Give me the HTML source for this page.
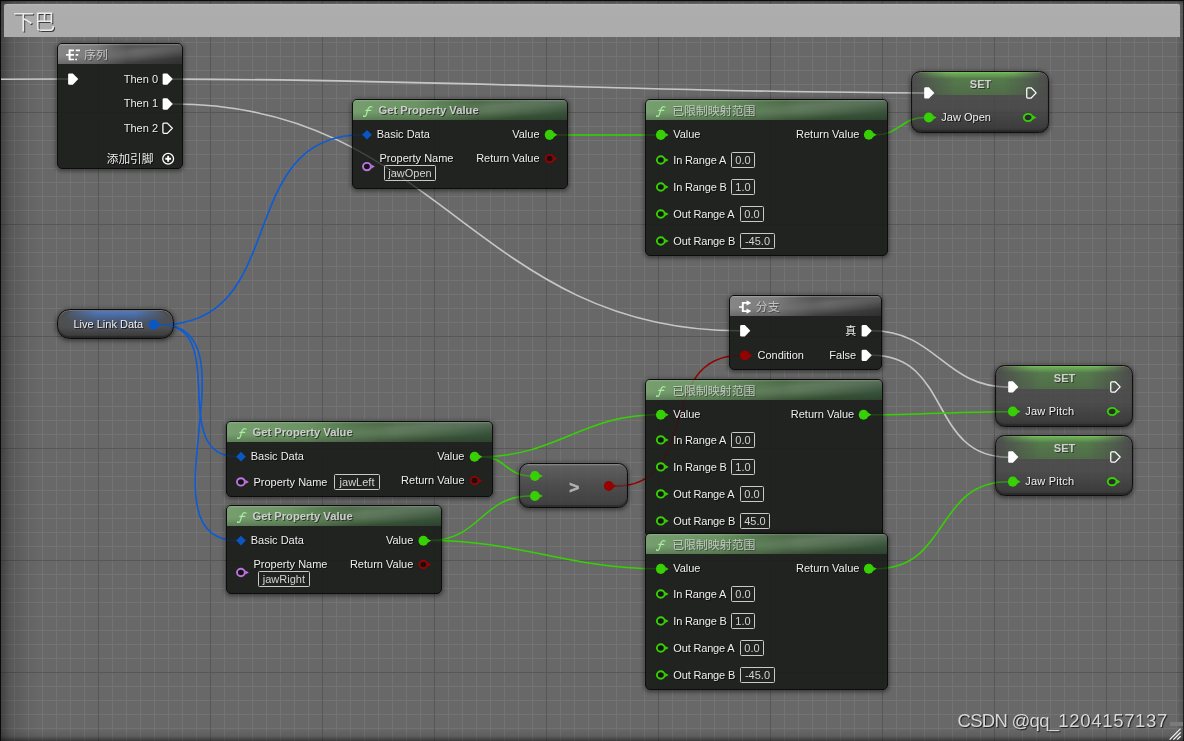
<!DOCTYPE html>
<html><head><meta charset="utf-8"><title>Blueprint</title>
<style>html,body{margin:0;padding:0;background:#676767;}
body{width:1184px;height:741px;overflow:hidden;position:relative;font-family:"Liberation Sans","Noto Sans CJK SC",sans-serif;font-size:11px;color:#f2f2f2;}
#bg{position:absolute;left:0;top:0;width:1184px;height:741px;background-color:#686868;
background-image:
 linear-gradient(to right,#575757 1px,transparent 1px),
 linear-gradient(to bottom,#575757 1px,transparent 1px),
 linear-gradient(to right,#737373 1px,transparent 1px),
 linear-gradient(to bottom,#737373 1px,transparent 1px);
background-size:112px 112px,112px 112px,14px 14px,14px 14px;
background-position:98px 0,0 0,0 0,0 0;}
#vig{position:absolute;left:0;top:0;width:1184px;height:741px;pointer-events:none;
background:
 linear-gradient(to right,rgba(0,0,0,.4),rgba(0,0,0,.16) 10px,rgba(0,0,0,.05) 26px,rgba(0,0,0,0) 42px),
 linear-gradient(to top,rgba(0,0,0,.45),rgba(0,0,0,.1) 5px,rgba(0,0,0,0) 12px),
 linear-gradient(to left,rgba(0,0,0,.7) 0,rgba(0,0,0,.7) 1px,rgba(0,0,0,.18) 1.2px,rgba(0,0,0,.1) 4px,rgba(0,0,0,0) 9px),
 linear-gradient(to bottom,rgba(0,0,0,.5),rgba(0,0,0,.1) 3px,rgba(0,0,0,0) 6px);}
#edgeT{position:absolute;left:0;top:0;width:1184px;height:1px;background:#0a0a0a;}
#edgeL{position:absolute;left:0;top:0;width:1px;height:741px;background:#0a0a0a;}
#chd{position:absolute;left:4px;top:4px;width:1176px;height:33px;background:linear-gradient(to bottom,#b9b9b9 0,#adadad 2px,#acacac 100%);border-radius:2px 2px 0 0;will-change:transform;}
#chd span{position:absolute;left:9.3px;top:6px;font-size:21px;line-height:24px;color:#ececec;text-shadow:1px 1px 0 #3a3a3a;}
#layer{position:absolute;left:0;top:0;width:1184px;height:741px;will-change:transform;}
.wires{position:absolute;left:0;top:0;}
.node{position:absolute;box-sizing:border-box;border:1px solid #0c0c0c;border-radius:5px;background:rgba(27,29,27,.925);box-shadow:0 1px 4px 1px rgba(0,0,0,.45);}
.nl{position:absolute;}
.in{position:absolute;left:-1px;top:-1px;right:-1px;bottom:-1px;}
.hd{position:absolute;left:1px;top:1px;right:1px;height:20px;border-radius:4px 4px 0 0;}
.hd.green{background:linear-gradient(to bottom,rgba(255,255,255,.2) 0,rgba(255,255,255,0) 1.8px,rgba(0,0,0,0) 60%,rgba(0,0,0,.2) 100%),linear-gradient(to right,#769e6f 0%,#6b9364 30%,#44633f 58%,#38523a 100%);}
.hd.gray{background:linear-gradient(to bottom,rgba(255,255,255,.3) 0,rgba(255,255,255,0) 1.8px,rgba(0,0,0,0) 60%,rgba(0,0,0,.2) 100%),linear-gradient(to right,#868686 0%,#7c7c7c 30%,#4e4e4e 56%,#3a3a3a 100%);}
.hd::after{content:"";position:absolute;left:35%;right:0;top:0;bottom:0;border-radius:0 4px 0 0;background:linear-gradient(174deg,rgba(255,255,255,0) 8%,rgba(255,255,255,.17) 38%,rgba(255,255,255,.15) 50%,rgba(255,255,255,0) 78%);-webkit-mask-image:linear-gradient(to right,transparent 0,#000 45%,#000 100%);mask-image:linear-gradient(to right,transparent 0,#000 45%,#000 100%);}
.fi{position:absolute;left:10.5px;top:3px;font-family:"Liberation Serif",serif;font-style:italic;font-size:15px;line-height:16px;color:#a8ee9f;}
.ic{position:absolute;}
.tt{position:absolute;left:26.5px;top:4.1px;font-weight:bold;font-size:11.2px;line-height:14px;color:#cdcdcd;text-shadow:1px 1px 0 rgba(0,0,0,.55);white-space:nowrap;}
.tt.cj{font-weight:normal;font-size:11.9px;left:27.2px;top:4.8px;color:#c0c6c0;text-shadow:1px 1px 0 rgba(0,0,0,.35);}
.pin{position:absolute;overflow:visible;}
.lbl{position:absolute;line-height:16px;height:16px;white-space:nowrap;color:#eeeeee;text-shadow:1px 1px 0 rgba(0,0,0,.7);}
.lbl.cj{font-size:11.7px;}
.lbl.rg{letter-spacing:-0.17px;}
.box{position:absolute;box-sizing:border-box;height:15.6px;line-height:15.4px;padding:0;text-align:center;border:1px solid #c9c9c9;border-radius:1.5px;color:#d2d2d2;white-space:nowrap;font-size:11px;}
.node.set{box-shadow:0 1px 4px 1px rgba(0,0,0,.45),inset 0 1px 0 rgba(255,255,255,.12),inset 0 -2px 1.5px rgba(0,0,0,.3);border-radius:9.5px;border-color:#101010;background:linear-gradient(to bottom,rgba(72,72,72,.82) 0,rgba(70,70,70,.82) 60%,rgba(50,50,50,.88) 100%);}
.setgl{position:absolute;left:3px;right:3px;top:1px;height:22.5px;border-radius:9px 9px 0 0;background:linear-gradient(to bottom,rgba(96,170,76,.55) 0,rgba(84,140,70,.5) 100%);
-webkit-mask-image:linear-gradient(to right,transparent 0,#000 32%,#000 68%,transparent 100%);mask-image:linear-gradient(to right,transparent 0,#000 32%,#000 68%,transparent 100%);}
.setgl2{position:absolute;left:3px;right:3px;top:1px;height:7px;border-radius:9px 9px 0 0;background:linear-gradient(to bottom,rgba(135,225,100,.6) 0,rgba(120,210,90,0) 100%);
-webkit-mask-image:linear-gradient(to right,transparent 0,#000 25%,#000 75%,transparent 100%);mask-image:linear-gradient(to right,transparent 0,#000 25%,#000 75%,transparent 100%);}
.settt{position:absolute;left:0;right:0;top:6.2px;text-align:center;font-weight:bold;font-size:11px;line-height:14px;color:#d0d0d0;text-shadow:1px 1px 0 rgba(0,0,0,.45);padding-left:1px;}
.node.var{box-shadow:0 1px 4px 1px rgba(0,0,0,.45),inset 0 1px 0 rgba(255,255,255,.2),inset 0 -2px 1.5px rgba(0,0,0,.3);border-radius:12.5px;background:linear-gradient(to bottom,rgba(70,72,74,.8) 0,rgba(72,72,72,.8) 60%,rgba(48,48,48,.86) 100%);}
.varglow{position:absolute;left:4px;right:4px;top:1.5px;height:22px;border-radius:13px 13px 0 0;background:linear-gradient(to bottom,rgba(80,130,215,.85),rgba(60,100,170,.35) 50%,rgba(60,100,170,0));-webkit-mask-image:linear-gradient(to right,transparent 0,#000 32%,#000 68%,transparent 100%);mask-image:linear-gradient(to right,transparent 0,#000 32%,#000 68%,transparent 100%);}
.node.op{box-shadow:0 1px 4px 1px rgba(0,0,0,.45),inset 0 -2px 1.5px rgba(0,0,0,.3);border-radius:9.5px;background:linear-gradient(to bottom,rgba(150,150,150,.85) 0,rgba(92,92,92,.82) 2px,rgba(72,72,72,.82) 45%,rgba(56,56,56,.86) 100%);}
.optt{position:absolute;left:50.2px;top:15px;font-weight:bold;font-size:17px;line-height:20px;color:#b2b2b2;-webkit-text-stroke:0.7px #b2b2b2;}
#wm{position:absolute;left:957.6px;top:710px;font-size:18.5px;line-height:22px;color:#d8d8d8;text-shadow:1px 1px 1px rgba(0,0,0,.75);white-space:nowrap;font-family:"Liberation Sans",sans-serif;}
#grip{position:absolute;left:1169px;top:728px;}
#gbar{position:absolute;left:1170px;top:722px;width:13px;height:4px;background:#7b7b7b;}
</style></head>
<body>
<div id="bg"></div>
<div id="vig"></div>
<div id="chd"><span>下巴</span></div>
<div id="layer">
<svg class="wires" width="1184" height="741" viewBox="0 0 1184 741"><g id="wp"><path d="M-60.0,79.5 C-17.2,79.5 25.2,79.1 68.0,79.1" fill="none" stroke="#c6c6c6" stroke-width="1.55" stroke-linecap="round"/><path d="M173.1,79.1 C428.1,79.1 669.4,92.9 924.4,92.9" fill="none" stroke="#c6c6c6" stroke-width="1.55" stroke-linecap="round"/><path d="M173.1,103.9 C437.8,103.9 475.5,330.8 740.2,330.8" fill="none" stroke="#c6c6c6" stroke-width="1.55" stroke-linecap="round"/><path d="M872.1,330.8 C936.3,330.8 944.1,387.1 1008.3,387.1" fill="none" stroke="#c6c6c6" stroke-width="1.55" stroke-linecap="round"/><path d="M872.1,355.3 C951.5,355.3 928.9,457.2 1008.3,457.2" fill="none" stroke="#c6c6c6" stroke-width="1.55" stroke-linecap="round"/><path d="M161.2,324.7 C291.6,324.7 232.0,134.7 362.4,134.7" fill="none" stroke="#0c5cd8" stroke-width="1.55" stroke-linecap="round"/><path d="M161.2,324.7 C230.2,324.7 167.3,456.6 236.3,456.6" fill="none" stroke="#0c5cd8" stroke-width="1.55" stroke-linecap="round"/><path d="M161.2,324.7 C258.1,324.7 139.4,540.4 236.3,540.4" fill="none" stroke="#0c5cd8" stroke-width="1.55" stroke-linecap="round"/><path d="M557.5,134.9 C590.3,134.9 623.2,134.9 656.0,134.9" fill="none" stroke="#36d005" stroke-width="1.5" stroke-linecap="round"/><path d="M876.5,134.8 C898.1,134.8 902.4,117.5 924.0,117.5" fill="none" stroke="#36d005" stroke-width="1.5" stroke-linecap="round"/><path d="M482.3,456.7 C554.2,456.7 584.1,414.7 656.0,414.7" fill="none" stroke="#36d005" stroke-width="1.5" stroke-linecap="round"/><path d="M482.3,456.7 C504.6,456.7 507.7,476.0 530.0,476.0" fill="none" stroke="#36d005" stroke-width="1.5" stroke-linecap="round"/><path d="M431.2,540.4 C478.9,540.4 482.3,496.0 530.0,496.0" fill="none" stroke="#36d005" stroke-width="1.5" stroke-linecap="round"/><path d="M431.2,540.4 C515.6,540.4 571.6,568.8 656.0,568.8" fill="none" stroke="#36d005" stroke-width="1.5" stroke-linecap="round"/><path d="M871.5,414.7 C918.0,414.7 961.5,411.7 1008.0,411.7" fill="none" stroke="#36d005" stroke-width="1.5" stroke-linecap="round"/><path d="M876.5,568.8 C949.4,568.8 935.1,481.7 1008.0,481.7" fill="none" stroke="#36d005" stroke-width="1.5" stroke-linecap="round"/><path d="M616.2,486.0 C701.0,486.0 655.2,355.5 740.0,355.5" fill="none" stroke="#920404" stroke-width="1.5" stroke-linecap="round"/></g></svg>
<div class="node " style="left:57px;top:43px;width:126px;height:126px"><div class="in"><div class="hd gray"></div></div></div>
<div class="node var" style="left:57px;top:309px;width:117px;height:30px"><div class="in"><div class="varglow"></div></div></div>
<div class="node " style="left:352px;top:99px;width:216px;height:90px"><div class="in"><div class="hd green"></div></div></div>
<div class="node " style="left:645px;top:99px;width:243px;height:157px"><div class="in"><div class="hd green"></div></div></div>
<div class="node set" style="left:911px;top:71px;width:138px;height:62px"><div class="in"><div class="setgl"></div><div class="setgl2"></div></div></div>
<div class="node " style="left:729px;top:295px;width:153px;height:75px"><div class="in"><div class="hd gray"></div></div></div>
<div class="node " style="left:226px;top:421px;width:267px;height:76px"><div class="in"><div class="hd green"></div></div></div>
<div class="node " style="left:226px;top:505px;width:216px;height:89px"><div class="in"><div class="hd green"></div></div></div>
<div class="node op" style="left:519px;top:463px;width:109px;height:45px"><div class="in"></div></div>
<div class="node " style="left:645px;top:379px;width:238px;height:158px"><div class="in"><div class="hd green"></div></div></div>
<div class="node " style="left:645px;top:533px;width:243px;height:157px"><div class="in"><div class="hd green"></div></div></div>
<div class="node set" style="left:995px;top:365px;width:138px;height:62px"><div class="in"><div class="setgl"></div><div class="setgl2"></div></div></div>
<div class="node set" style="left:995px;top:435px;width:138px;height:61px"><div class="in"><div class="setgl"></div><div class="setgl2"></div></div></div>
<svg class="wires" width="1184" height="741" viewBox="0 0 1184 741"><defs><clipPath id="cc"><rect x="58" y="310" width="115" height="28" rx="8"/><rect x="912" y="72" width="136" height="60" rx="8"/><rect x="520" y="464" width="107" height="43" rx="8"/><rect x="996" y="366" width="136" height="60" rx="8"/><rect x="996" y="436" width="136" height="59" rx="8"/></clipPath></defs><g opacity="0.16"><path d="M-60.0,79.5 C-17.2,79.5 25.2,79.1 68.0,79.1" fill="none" stroke="#c6c6c6" stroke-width="1.55" stroke-linecap="round"/><path d="M173.1,79.1 C428.1,79.1 669.4,92.9 924.4,92.9" fill="none" stroke="#c6c6c6" stroke-width="1.55" stroke-linecap="round"/><path d="M173.1,103.9 C437.8,103.9 475.5,330.8 740.2,330.8" fill="none" stroke="#c6c6c6" stroke-width="1.55" stroke-linecap="round"/><path d="M872.1,330.8 C936.3,330.8 944.1,387.1 1008.3,387.1" fill="none" stroke="#c6c6c6" stroke-width="1.55" stroke-linecap="round"/><path d="M872.1,355.3 C951.5,355.3 928.9,457.2 1008.3,457.2" fill="none" stroke="#c6c6c6" stroke-width="1.55" stroke-linecap="round"/><path d="M161.2,324.7 C291.6,324.7 232.0,134.7 362.4,134.7" fill="none" stroke="#0c5cd8" stroke-width="1.55" stroke-linecap="round"/><path d="M161.2,324.7 C230.2,324.7 167.3,456.6 236.3,456.6" fill="none" stroke="#0c5cd8" stroke-width="1.55" stroke-linecap="round"/><path d="M161.2,324.7 C258.1,324.7 139.4,540.4 236.3,540.4" fill="none" stroke="#0c5cd8" stroke-width="1.55" stroke-linecap="round"/><path d="M557.5,134.9 C590.3,134.9 623.2,134.9 656.0,134.9" fill="none" stroke="#36d005" stroke-width="1.5" stroke-linecap="round"/><path d="M876.5,134.8 C898.1,134.8 902.4,117.5 924.0,117.5" fill="none" stroke="#36d005" stroke-width="1.5" stroke-linecap="round"/><path d="M482.3,456.7 C554.2,456.7 584.1,414.7 656.0,414.7" fill="none" stroke="#36d005" stroke-width="1.5" stroke-linecap="round"/><path d="M482.3,456.7 C504.6,456.7 507.7,476.0 530.0,476.0" fill="none" stroke="#36d005" stroke-width="1.5" stroke-linecap="round"/><path d="M431.2,540.4 C478.9,540.4 482.3,496.0 530.0,496.0" fill="none" stroke="#36d005" stroke-width="1.5" stroke-linecap="round"/><path d="M431.2,540.4 C515.6,540.4 571.6,568.8 656.0,568.8" fill="none" stroke="#36d005" stroke-width="1.5" stroke-linecap="round"/><path d="M871.5,414.7 C918.0,414.7 961.5,411.7 1008.0,411.7" fill="none" stroke="#36d005" stroke-width="1.5" stroke-linecap="round"/><path d="M876.5,568.8 C949.4,568.8 935.1,481.7 1008.0,481.7" fill="none" stroke="#36d005" stroke-width="1.5" stroke-linecap="round"/><path d="M616.2,486.0 C701.0,486.0 655.2,355.5 740.0,355.5" fill="none" stroke="#920404" stroke-width="1.5" stroke-linecap="round"/></g><g opacity="0.32" clip-path="url(#cc)"><path d="M-60.0,79.5 C-17.2,79.5 25.2,79.1 68.0,79.1" fill="none" stroke="#c6c6c6" stroke-width="1.55" stroke-linecap="round"/><path d="M173.1,79.1 C428.1,79.1 669.4,92.9 924.4,92.9" fill="none" stroke="#c6c6c6" stroke-width="1.55" stroke-linecap="round"/><path d="M173.1,103.9 C437.8,103.9 475.5,330.8 740.2,330.8" fill="none" stroke="#c6c6c6" stroke-width="1.55" stroke-linecap="round"/><path d="M872.1,330.8 C936.3,330.8 944.1,387.1 1008.3,387.1" fill="none" stroke="#c6c6c6" stroke-width="1.55" stroke-linecap="round"/><path d="M872.1,355.3 C951.5,355.3 928.9,457.2 1008.3,457.2" fill="none" stroke="#c6c6c6" stroke-width="1.55" stroke-linecap="round"/><path d="M161.2,324.7 C291.6,324.7 232.0,134.7 362.4,134.7" fill="none" stroke="#0c5cd8" stroke-width="1.55" stroke-linecap="round"/><path d="M161.2,324.7 C230.2,324.7 167.3,456.6 236.3,456.6" fill="none" stroke="#0c5cd8" stroke-width="1.55" stroke-linecap="round"/><path d="M161.2,324.7 C258.1,324.7 139.4,540.4 236.3,540.4" fill="none" stroke="#0c5cd8" stroke-width="1.55" stroke-linecap="round"/><path d="M557.5,134.9 C590.3,134.9 623.2,134.9 656.0,134.9" fill="none" stroke="#36d005" stroke-width="1.5" stroke-linecap="round"/><path d="M876.5,134.8 C898.1,134.8 902.4,117.5 924.0,117.5" fill="none" stroke="#36d005" stroke-width="1.5" stroke-linecap="round"/><path d="M482.3,456.7 C554.2,456.7 584.1,414.7 656.0,414.7" fill="none" stroke="#36d005" stroke-width="1.5" stroke-linecap="round"/><path d="M482.3,456.7 C504.6,456.7 507.7,476.0 530.0,476.0" fill="none" stroke="#36d005" stroke-width="1.5" stroke-linecap="round"/><path d="M431.2,540.4 C478.9,540.4 482.3,496.0 530.0,496.0" fill="none" stroke="#36d005" stroke-width="1.5" stroke-linecap="round"/><path d="M431.2,540.4 C515.6,540.4 571.6,568.8 656.0,568.8" fill="none" stroke="#36d005" stroke-width="1.5" stroke-linecap="round"/><path d="M871.5,414.7 C918.0,414.7 961.5,411.7 1008.0,411.7" fill="none" stroke="#36d005" stroke-width="1.5" stroke-linecap="round"/><path d="M876.5,568.8 C949.4,568.8 935.1,481.7 1008.0,481.7" fill="none" stroke="#36d005" stroke-width="1.5" stroke-linecap="round"/><path d="M616.2,486.0 C701.0,486.0 655.2,355.5 740.0,355.5" fill="none" stroke="#920404" stroke-width="1.5" stroke-linecap="round"/></g></svg>
<div class="nl" style="left:57px;top:43px;width:126px;height:126px"><svg class="ic" style="left:9px;top:6px" width="15" height="12" viewBox="0 0 15 12"><path d="M0,5.9 H3.4" stroke="#fff" stroke-width="1.6" fill="none"/><path d="M3.6,0.5 V11.3" stroke="#fff" stroke-width="2" fill="none"/><path d="M3.6,1.3 H8 M3.6,5.9 H8 M3.6,10.5 H8" stroke="#fff" stroke-width="1.7" fill="none"/><path d="M9.7,1.3 H14 M9.7,5.9 H12.2 M9.2,10.5 H11" stroke="#fff" stroke-width="1.7" fill="none"/></svg><span class="tt cj" style="left:27px;color:#c4c4c4">序列</span><span class="lbl r" style="right:25.00px;top:27.60px;">Then 0</span><span class="lbl r" style="right:25.00px;top:51.95px;">Then 1</span><span class="lbl r" style="right:25.00px;top:76.85px;">Then 2</span><span class="lbl cj r" style="right:29.55px;top:108.05px;">添加引脚</span></div>
<div class="nl" style="left:57px;top:309px;width:117px;height:30px"><span class="lbl" style="left:16.50px;top:6.95px;">Live Link Data</span></div>
<div class="nl" style="left:352px;top:99px;width:216px;height:90px"><svg class="ic" style="left:11px;top:7px" width="11" height="12" viewBox="0 0 11 12"><path d="M0.2,9.7 C1.1,10.8 2.7,10.6 3.3,8.6 L5,3.1 C5.6,1 7.1,0.3 9,1" fill="none" stroke="#a8ee9f" stroke-width="1.25" stroke-linecap="round"/><path d="M2.8,4.4 H7.8" stroke="#a8ee9f" stroke-width="1.1" stroke-linecap="round"/></svg><span class="tt">Get Property Value</span><span class="lbl" style="left:24.70px;top:27.15px;">Basic Data</span><span class="lbl r" style="right:28.45px;top:27.15px;">Value</span><span class="lbl r" style="right:28.45px;top:51.10px;">Return Value</span><span class="lbl" style="left:27.50px;top:51.10px;">Property Name</span><span class="box" style="left:32.00px;top:66.20px;width:52px">jawOpen</span></div>
<div class="nl" style="left:645px;top:99px;width:243px;height:157px"><svg class="ic" style="left:11px;top:7px" width="11" height="12" viewBox="0 0 11 12"><path d="M0.2,9.7 C1.1,10.8 2.7,10.6 3.3,8.6 L5,3.1 C5.6,1 7.1,0.3 9,1" fill="none" stroke="#a8ee9f" stroke-width="1.25" stroke-linecap="round"/><path d="M2.8,4.4 H7.8" stroke="#a8ee9f" stroke-width="1.1" stroke-linecap="round"/></svg><span class="tt cj">已限制映射范围</span><span class="lbl" style="left:28.15px;top:27.15px;">Value</span><span class="lbl r" style="right:28.60px;top:27.15px;">Return Value</span><span class="lbl rg" style="left:28.35px;top:52.90px;">In Range A</span><span class="box" style="left:86.00px;top:53.20px;width:24px">0.0</span><span class="lbl rg" style="left:28.35px;top:79.90px;">In Range B</span><span class="box" style="left:86.00px;top:80.20px;width:24px">1.0</span><span class="lbl rg" style="left:28.35px;top:106.90px;">Out Range A</span><span class="box" style="left:95.00px;top:107.20px;width:24px">0.0</span><span class="lbl rg" style="left:28.35px;top:133.90px;">Out Range B</span><span class="box" style="left:95.00px;top:134.20px;width:35px">-45.0</span></div>
<div class="nl" style="left:911px;top:71px;width:138px;height:62px"><span class="settt">SET</span><span class="lbl" style="left:30.35px;top:38.10px;">Jaw Open</span></div>
<div class="nl" style="left:729px;top:295px;width:153px;height:75px"><svg class="ic" style="left:10px;top:5px" width="13" height="14" viewBox="0 0 13 14"><path d="M0,7 H3.5" stroke="#fff" stroke-width="1.6" fill="none"/><path d="M8.2,2.9 H3.8 V11.1 H8.2" stroke="#fff" stroke-width="1.9" fill="none"/><path d="M7.6,0.2 L12.3,2.9 L7.6,5.6 Z M7.6,8.4 L12.3,11.1 L7.6,13.8 Z" fill="#fff"/></svg><span class="tt cj" style="left:26.8px;color:#c4c4c4">分支</span><span class="lbl cj r" style="right:25.75px;top:27.55px;font-size:11px">真</span><span class="lbl" style="left:28.50px;top:52.20px;">Condition</span><span class="lbl r" style="right:25.75px;top:52.20px;">False</span></div>
<div class="nl" style="left:226px;top:421px;width:267px;height:76px"><svg class="ic" style="left:11px;top:7px" width="11" height="12" viewBox="0 0 11 12"><path d="M0.2,9.7 C1.1,10.8 2.7,10.6 3.3,8.6 L5,3.1 C5.6,1 7.1,0.3 9,1" fill="none" stroke="#a8ee9f" stroke-width="1.25" stroke-linecap="round"/><path d="M2.8,4.4 H7.8" stroke="#a8ee9f" stroke-width="1.1" stroke-linecap="round"/></svg><span class="tt">Get Property Value</span><span class="lbl" style="left:24.70px;top:27.10px;">Basic Data</span><span class="lbl r" style="right:28.50px;top:27.10px;">Value</span><span class="lbl r" style="right:28.50px;top:51.05px;">Return Value</span><span class="lbl" style="left:27.50px;top:52.95px;">Property Name</span><span class="box" style="left:108.10px;top:53.10px;width:45.9px">jawLeft</span></div>
<div class="nl" style="left:226px;top:505px;width:216px;height:89px"><svg class="ic" style="left:11px;top:7px" width="11" height="12" viewBox="0 0 11 12"><path d="M0.2,9.7 C1.1,10.8 2.7,10.6 3.3,8.6 L5,3.1 C5.6,1 7.1,0.3 9,1" fill="none" stroke="#a8ee9f" stroke-width="1.25" stroke-linecap="round"/><path d="M2.8,4.4 H7.8" stroke="#a8ee9f" stroke-width="1.1" stroke-linecap="round"/></svg><span class="tt">Get Property Value</span><span class="lbl" style="left:24.70px;top:27.05px;">Basic Data</span><span class="lbl r" style="right:28.70px;top:27.05px;">Value</span><span class="lbl r" style="right:28.70px;top:51.00px;">Return Value</span><span class="lbl" style="left:27.50px;top:51.00px;">Property Name</span><span class="box" style="left:32.00px;top:66.10px;width:51.8px">jawRight</span></div>
<div class="nl" style="left:519px;top:463px;width:109px;height:45px"><span class="optt">&gt;</span></div>
<div class="nl" style="left:645px;top:379px;width:238px;height:158px"><svg class="ic" style="left:11px;top:7px" width="11" height="12" viewBox="0 0 11 12"><path d="M0.2,9.7 C1.1,10.8 2.7,10.6 3.3,8.6 L5,3.1 C5.6,1 7.1,0.3 9,1" fill="none" stroke="#a8ee9f" stroke-width="1.25" stroke-linecap="round"/><path d="M2.8,4.4 H7.8" stroke="#a8ee9f" stroke-width="1.1" stroke-linecap="round"/></svg><span class="tt cj">已限制映射范围</span><span class="lbl" style="left:28.15px;top:27.05px;">Value</span><span class="lbl r" style="right:28.80px;top:27.05px;">Return Value</span><span class="lbl rg" style="left:28.35px;top:52.80px;">In Range A</span><span class="box" style="left:86.00px;top:53.10px;width:24px">0.0</span><span class="lbl rg" style="left:28.35px;top:79.80px;">In Range B</span><span class="box" style="left:86.00px;top:80.10px;width:24px">1.0</span><span class="lbl rg" style="left:28.35px;top:106.80px;">Out Range A</span><span class="box" style="left:95.00px;top:107.10px;width:24px">0.0</span><span class="lbl rg" style="left:28.35px;top:133.80px;">Out Range B</span><span class="box" style="left:95.00px;top:134.10px;width:29.9px">45.0</span></div>
<div class="nl" style="left:645px;top:533px;width:243px;height:157px"><svg class="ic" style="left:11px;top:7px" width="11" height="12" viewBox="0 0 11 12"><path d="M0.2,9.7 C1.1,10.8 2.7,10.6 3.3,8.6 L5,3.1 C5.6,1 7.1,0.3 9,1" fill="none" stroke="#a8ee9f" stroke-width="1.25" stroke-linecap="round"/><path d="M2.8,4.4 H7.8" stroke="#a8ee9f" stroke-width="1.1" stroke-linecap="round"/></svg><span class="tt cj">已限制映射范围</span><span class="lbl" style="left:28.15px;top:27.15px;">Value</span><span class="lbl r" style="right:28.60px;top:27.15px;">Return Value</span><span class="lbl rg" style="left:28.35px;top:52.90px;">In Range A</span><span class="box" style="left:86.00px;top:53.20px;width:24px">0.0</span><span class="lbl rg" style="left:28.35px;top:79.90px;">In Range B</span><span class="box" style="left:86.00px;top:80.20px;width:24px">1.0</span><span class="lbl rg" style="left:28.35px;top:106.90px;">Out Range A</span><span class="box" style="left:95.00px;top:107.20px;width:24px">0.0</span><span class="lbl rg" style="left:28.35px;top:133.90px;">Out Range B</span><span class="box" style="left:95.00px;top:134.20px;width:35px">-45.0</span></div>
<div class="nl" style="left:995px;top:365px;width:138px;height:62px"><span class="settt">SET</span><span class="lbl" style="left:30.35px;top:38.10px;letter-spacing:0.2px">Jaw Pitch</span></div>
<div class="nl" style="left:995px;top:435px;width:138px;height:61px"><span class="settt">SET</span><span class="lbl" style="left:30.35px;top:38.25px;letter-spacing:0.2px">Jaw Pitch</span></div>
<svg class="wires" width="1184" height="741" viewBox="0 0 1184 741"><g transform="translate(73.10 79.10)"><path d="M-3.7,-5.7 H-0.3 L5.2,0 L-0.3,5.7 H-3.7 Q-5,5.7 -5,4.4 V-4.4 Q-5,-5.7 -3.7,-5.7 Z" fill="#fff"/></g>
<g transform="translate(167.60 79.10)"><path d="M-3.7,-5.7 H-0.3 L5.2,0 L-0.3,5.7 H-3.7 Q-5,5.7 -5,4.4 V-4.4 Q-5,-5.7 -3.7,-5.7 Z" fill="#fff"/></g>
<g transform="translate(167.60 103.95)"><path d="M-3.7,-5.7 H-0.3 L5.2,0 L-0.3,5.7 H-3.7 Q-5,5.7 -5,4.4 V-4.4 Q-5,-5.7 -3.7,-5.7 Z" fill="#fff"/></g>
<g transform="translate(167.60 128.25)"><path d="M-3.6,-5.1 H-0.3 L4.7,0 L-0.3,5.1 H-3.6 Q-4.7,5.1 -4.7,4 V-4 Q-4.7,-5.1 -3.6,-5.1 Z" fill="none" stroke="#fff" stroke-width="1.25" stroke-linejoin="round"/></g>
<g transform="translate(168.15 158.75)"><circle cx="0" cy="0" r="5.4" fill="none" stroke="#fff" stroke-width="1.3"/><path d="M0,-2.9 V2.9 M-2.9,0 H2.9" stroke="#fff" stroke-width="1.9"/></g>
<g transform="translate(153.60 324.75)"><path d="M4.4,-2.1 L7.8,0 L4.4,2.1 Z" fill="#0a57c4"/><ellipse cx="0" cy="0" rx="4.85" ry="5.05" fill="#0a57c4"/></g>
<g transform="translate(367.00 134.70)"><path d="M0,-4.8 L4.8,0 L0,4.8 L-4.8,0 Z" fill="#0a57c4"/></g>
<g transform="translate(549.60 134.85)"><path d="M4.4,-2.1 L7.8,0 L4.4,2.1 Z" fill="#36d005"/><ellipse cx="0" cy="0" rx="4.85" ry="5.05" fill="#36d005"/></g>
<g transform="translate(549.60 158.60)"><path d="M4.4,-2.1 L7.9,0 L4.4,2.1 Z" fill="#920404"/><ellipse cx="0" cy="0" rx="3.9" ry="3.7" fill="#1a0e0e" stroke="#920404" stroke-width="1.9"/></g>
<g transform="translate(366.90 166.60)"><path d="M4.4,-2.1 L7.9,0 L4.4,2.1 Z" fill="#bd74e0"/><ellipse cx="0" cy="0" rx="3.9" ry="3.7" fill="#141414" stroke="#bd74e0" stroke-width="1.9"/></g>
<g transform="translate(660.80 134.90)"><path d="M4.4,-2.1 L7.8,0 L4.4,2.1 Z" fill="#36d005"/><ellipse cx="0" cy="0" rx="4.85" ry="5.05" fill="#36d005"/></g>
<g transform="translate(868.75 134.80)"><path d="M4.4,-2.1 L7.8,0 L4.4,2.1 Z" fill="#36d005"/><ellipse cx="0" cy="0" rx="4.85" ry="5.05" fill="#36d005"/></g>
<g transform="translate(660.80 160.00)"><path d="M4.4,-2.1 L7.9,0 L4.4,2.1 Z" fill="#36d005"/><ellipse cx="0" cy="0" rx="3.9" ry="3.7" fill="#141414" stroke="#36d005" stroke-width="1.9"/></g>
<g transform="translate(660.80 187.00)"><path d="M4.4,-2.1 L7.9,0 L4.4,2.1 Z" fill="#36d005"/><ellipse cx="0" cy="0" rx="3.9" ry="3.7" fill="#141414" stroke="#36d005" stroke-width="1.9"/></g>
<g transform="translate(660.80 214.00)"><path d="M4.4,-2.1 L7.9,0 L4.4,2.1 Z" fill="#36d005"/><ellipse cx="0" cy="0" rx="3.9" ry="3.7" fill="#141414" stroke="#36d005" stroke-width="1.9"/></g>
<g transform="translate(660.80 241.00)"><path d="M4.4,-2.1 L7.9,0 L4.4,2.1 Z" fill="#36d005"/><ellipse cx="0" cy="0" rx="3.9" ry="3.7" fill="#141414" stroke="#36d005" stroke-width="1.9"/></g>
<g transform="translate(929.20 92.90)"><path d="M-3.7,-5.7 H-0.3 L5.2,0 L-0.3,5.7 H-3.7 Q-5,5.7 -5,4.4 V-4.4 Q-5,-5.7 -3.7,-5.7 Z" fill="#fff"/></g>
<g transform="translate(1031.45 92.90)"><path d="M-3.6,-5.1 H-0.3 L4.7,0 L-0.3,5.1 H-3.6 Q-4.7,5.1 -4.7,4 V-4 Q-4.7,-5.1 -3.6,-5.1 Z" fill="none" stroke="#fff" stroke-width="1.25" stroke-linejoin="round"/></g>
<g transform="translate(928.75 117.50)"><path d="M4.4,-2.1 L7.8,0 L4.4,2.1 Z" fill="#36d005"/><ellipse cx="0" cy="0" rx="4.85" ry="5.05" fill="#36d005"/></g>
<g transform="translate(1028.15 117.50)"><path d="M4.8,-2.1 L8.3,0 L4.8,2.1 Z" fill="#36d005"/><ellipse cx="0" cy="0" rx="4.35" ry="3.6" fill="#2c2c2c" stroke="#36d005" stroke-width="1.9"/></g>
<g transform="translate(745.10 330.80)"><path d="M-3.7,-5.7 H-0.3 L5.2,0 L-0.3,5.7 H-3.7 Q-5,5.7 -5,4.4 V-4.4 Q-5,-5.7 -3.7,-5.7 Z" fill="#fff"/></g>
<g transform="translate(866.60 330.80)"><path d="M-3.7,-5.7 H-0.3 L5.2,0 L-0.3,5.7 H-3.7 Q-5,5.7 -5,4.4 V-4.4 Q-5,-5.7 -3.7,-5.7 Z" fill="#fff"/></g>
<g transform="translate(744.80 355.50)"><path d="M4.4,-2.1 L7.8,0 L4.4,2.1 Z" fill="#960202"/><ellipse cx="0" cy="0" rx="4.85" ry="5.05" fill="#960202"/></g>
<g transform="translate(866.60 355.35)"><path d="M-3.7,-5.7 H-0.3 L5.2,0 L-0.3,5.7 H-3.7 Q-5,5.7 -5,4.4 V-4.4 Q-5,-5.7 -3.7,-5.7 Z" fill="#fff"/></g>
<g transform="translate(241.00 456.65)"><path d="M0,-4.8 L4.8,0 L0,4.8 L-4.8,0 Z" fill="#0a57c4"/></g>
<g transform="translate(474.55 456.80)"><path d="M4.4,-2.1 L7.8,0 L4.4,2.1 Z" fill="#36d005"/><ellipse cx="0" cy="0" rx="4.85" ry="5.05" fill="#36d005"/></g>
<g transform="translate(474.55 480.55)"><path d="M4.4,-2.1 L7.9,0 L4.4,2.1 Z" fill="#920404"/><ellipse cx="0" cy="0" rx="3.9" ry="3.7" fill="#1a0e0e" stroke="#920404" stroke-width="1.9"/></g>
<g transform="translate(240.90 481.90)"><path d="M4.4,-2.1 L7.9,0 L4.4,2.1 Z" fill="#bd74e0"/><ellipse cx="0" cy="0" rx="3.9" ry="3.7" fill="#141414" stroke="#bd74e0" stroke-width="1.9"/></g>
<g transform="translate(241.00 540.60)"><path d="M0,-4.8 L4.8,0 L0,4.8 L-4.8,0 Z" fill="#0a57c4"/></g>
<g transform="translate(423.35 540.75)"><path d="M4.4,-2.1 L7.8,0 L4.4,2.1 Z" fill="#36d005"/><ellipse cx="0" cy="0" rx="4.85" ry="5.05" fill="#36d005"/></g>
<g transform="translate(423.35 564.50)"><path d="M4.4,-2.1 L7.9,0 L4.4,2.1 Z" fill="#920404"/><ellipse cx="0" cy="0" rx="3.9" ry="3.7" fill="#1a0e0e" stroke="#920404" stroke-width="1.9"/></g>
<g transform="translate(240.90 572.50)"><path d="M4.4,-2.1 L7.9,0 L4.4,2.1 Z" fill="#bd74e0"/><ellipse cx="0" cy="0" rx="3.9" ry="3.7" fill="#141414" stroke="#bd74e0" stroke-width="1.9"/></g>
<g transform="translate(534.90 476.00)"><path d="M4.4,-2.1 L7.8,0 L4.4,2.1 Z" fill="#36d005"/><ellipse cx="0" cy="0" rx="4.85" ry="5.05" fill="#36d005"/></g>
<g transform="translate(534.90 496.00)"><path d="M4.4,-2.1 L7.8,0 L4.4,2.1 Z" fill="#36d005"/><ellipse cx="0" cy="0" rx="4.85" ry="5.05" fill="#36d005"/></g>
<g transform="translate(608.75 486.00)"><path d="M4.4,-2.1 L7.8,0 L4.4,2.1 Z" fill="#960202"/><ellipse cx="0" cy="0" rx="4.85" ry="5.05" fill="#960202"/></g>
<g transform="translate(660.80 414.80)"><path d="M4.4,-2.1 L7.8,0 L4.4,2.1 Z" fill="#36d005"/><ellipse cx="0" cy="0" rx="4.85" ry="5.05" fill="#36d005"/></g>
<g transform="translate(863.55 414.70)"><path d="M4.4,-2.1 L7.8,0 L4.4,2.1 Z" fill="#36d005"/><ellipse cx="0" cy="0" rx="4.85" ry="5.05" fill="#36d005"/></g>
<g transform="translate(660.80 439.90)"><path d="M4.4,-2.1 L7.9,0 L4.4,2.1 Z" fill="#36d005"/><ellipse cx="0" cy="0" rx="3.9" ry="3.7" fill="#141414" stroke="#36d005" stroke-width="1.9"/></g>
<g transform="translate(660.80 466.90)"><path d="M4.4,-2.1 L7.9,0 L4.4,2.1 Z" fill="#36d005"/><ellipse cx="0" cy="0" rx="3.9" ry="3.7" fill="#141414" stroke="#36d005" stroke-width="1.9"/></g>
<g transform="translate(660.80 493.90)"><path d="M4.4,-2.1 L7.9,0 L4.4,2.1 Z" fill="#36d005"/><ellipse cx="0" cy="0" rx="3.9" ry="3.7" fill="#141414" stroke="#36d005" stroke-width="1.9"/></g>
<g transform="translate(660.80 520.90)"><path d="M4.4,-2.1 L7.9,0 L4.4,2.1 Z" fill="#36d005"/><ellipse cx="0" cy="0" rx="3.9" ry="3.7" fill="#141414" stroke="#36d005" stroke-width="1.9"/></g>
<g transform="translate(660.80 568.90)"><path d="M4.4,-2.1 L7.8,0 L4.4,2.1 Z" fill="#36d005"/><ellipse cx="0" cy="0" rx="4.85" ry="5.05" fill="#36d005"/></g>
<g transform="translate(868.75 568.80)"><path d="M4.4,-2.1 L7.8,0 L4.4,2.1 Z" fill="#36d005"/><ellipse cx="0" cy="0" rx="4.85" ry="5.05" fill="#36d005"/></g>
<g transform="translate(660.80 594.00)"><path d="M4.4,-2.1 L7.9,0 L4.4,2.1 Z" fill="#36d005"/><ellipse cx="0" cy="0" rx="3.9" ry="3.7" fill="#141414" stroke="#36d005" stroke-width="1.9"/></g>
<g transform="translate(660.80 621.00)"><path d="M4.4,-2.1 L7.9,0 L4.4,2.1 Z" fill="#36d005"/><ellipse cx="0" cy="0" rx="3.9" ry="3.7" fill="#141414" stroke="#36d005" stroke-width="1.9"/></g>
<g transform="translate(660.80 648.00)"><path d="M4.4,-2.1 L7.9,0 L4.4,2.1 Z" fill="#36d005"/><ellipse cx="0" cy="0" rx="3.9" ry="3.7" fill="#141414" stroke="#36d005" stroke-width="1.9"/></g>
<g transform="translate(660.80 675.00)"><path d="M4.4,-2.1 L7.9,0 L4.4,2.1 Z" fill="#36d005"/><ellipse cx="0" cy="0" rx="3.9" ry="3.7" fill="#141414" stroke="#36d005" stroke-width="1.9"/></g>
<g transform="translate(1013.20 386.90)"><path d="M-3.7,-5.7 H-0.3 L5.2,0 L-0.3,5.7 H-3.7 Q-5,5.7 -5,4.4 V-4.4 Q-5,-5.7 -3.7,-5.7 Z" fill="#fff"/></g>
<g transform="translate(1115.45 386.90)"><path d="M-3.6,-5.1 H-0.3 L4.7,0 L-0.3,5.1 H-3.6 Q-4.7,5.1 -4.7,4 V-4 Q-4.7,-5.1 -3.6,-5.1 Z" fill="none" stroke="#fff" stroke-width="1.25" stroke-linejoin="round"/></g>
<g transform="translate(1012.75 411.50)"><path d="M4.4,-2.1 L7.8,0 L4.4,2.1 Z" fill="#36d005"/><ellipse cx="0" cy="0" rx="4.85" ry="5.05" fill="#36d005"/></g>
<g transform="translate(1112.15 411.50)"><path d="M4.8,-2.1 L8.3,0 L4.8,2.1 Z" fill="#36d005"/><ellipse cx="0" cy="0" rx="4.35" ry="3.6" fill="#2c2c2c" stroke="#36d005" stroke-width="1.9"/></g>
<g transform="translate(1013.20 457.05)"><path d="M-3.7,-5.7 H-0.3 L5.2,0 L-0.3,5.7 H-3.7 Q-5,5.7 -5,4.4 V-4.4 Q-5,-5.7 -3.7,-5.7 Z" fill="#fff"/></g>
<g transform="translate(1115.45 457.05)"><path d="M-3.6,-5.1 H-0.3 L4.7,0 L-0.3,5.1 H-3.6 Q-4.7,5.1 -4.7,4 V-4 Q-4.7,-5.1 -3.6,-5.1 Z" fill="none" stroke="#fff" stroke-width="1.25" stroke-linejoin="round"/></g>
<g transform="translate(1012.75 481.65)"><path d="M4.4,-2.1 L7.8,0 L4.4,2.1 Z" fill="#36d005"/><ellipse cx="0" cy="0" rx="4.85" ry="5.05" fill="#36d005"/></g>
<g transform="translate(1112.15 481.65)"><path d="M4.8,-2.1 L8.3,0 L4.8,2.1 Z" fill="#36d005"/><ellipse cx="0" cy="0" rx="4.35" ry="3.6" fill="#2c2c2c" stroke="#36d005" stroke-width="1.9"/></g></svg>
<div id="wm"><span style="letter-spacing:-0.72px">CSDN @qq_</span><span style="letter-spacing:0.68px">1204157137</span></div>
</div>
<div id="gbar"></div><svg id="grip" width="12" height="12" viewBox="0 0 12 12"><path d="M0.6,11.6 L11.6,0.6 M4.4,11.6 L11.6,4.4 M8.2,11.6 L11.6,8.2" stroke="#f0f0f0" stroke-width="1.3"/></svg>
<div id="edgeT"></div><div id="edgeL"></div>
</body></html>
